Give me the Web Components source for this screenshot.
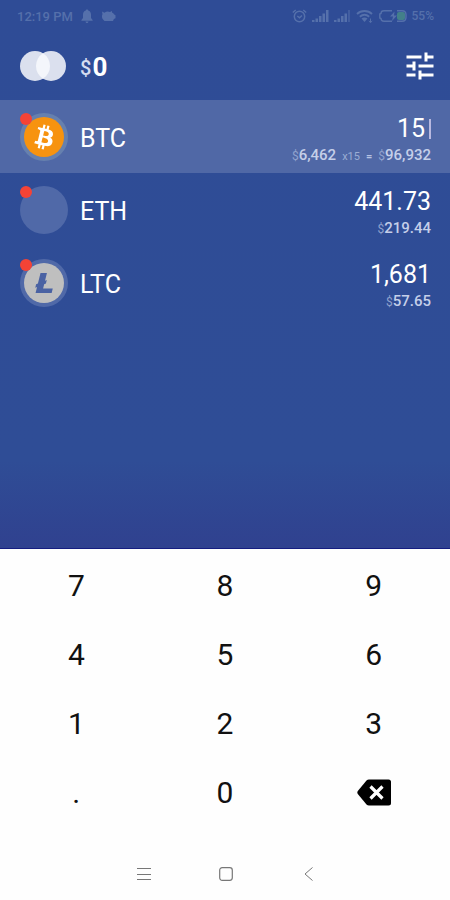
<!DOCTYPE html>
<html lang="en">
<head>
<meta charset="utf-8">
<meta name="viewport" content="width=device-width, initial-scale=1">
<title>Portfolio</title>
<style>
  body {
    margin: 0;
    font-family: Roboto, "Liberation Sans", sans-serif;
    color: #fff;
    background: #fefefe;
  }
</style>
</head>
<body>
<wallet-app>
  <status-bar slot="status"></status-bar>
  <total-header slot="header" total="0"></total-header>
  <coin-row symbol="BTC" amount="15" active>
    <coin-icon slot="icon" coin="btc"></coin-icon>
    <fiat-value value="6,462"></fiat-value>
    <small-note>x15</small-note>
    <small-note strong>=</small-note>
    <fiat-value value="96,932"></fiat-value>
  </coin-row>
  <coin-row symbol="ETH" amount="441.73">
    <coin-icon slot="icon"></coin-icon>
    <fiat-value value="219.44"></fiat-value>
  </coin-row>
  <coin-row symbol="LTC" amount="1,681">
    <coin-icon slot="icon" coin="ltc"></coin-icon>
    <fiat-value value="57.65"></fiat-value>
  </coin-row>
  <key-pad slot="keys"></key-pad>
  <nav-bar slot="nav"></nav-bar>
</wallet-app>

<script>
function makeTemplate(html) {
  const template = document.createElement("template");
  template.innerHTML = html;
  return template;
}

function attach(element, template) {
  element.attachShadow({ mode: "open" });
  element.shadowRoot.appendChild(template.content.cloneNode(true));
}

const appTemplate = makeTemplate(`
  <style>
    :host {
      display: flex;
      flex-direction: column;
      min-height: 100vh;
    }
    main {
      flex: 1;
      background: linear-gradient(to bottom, #2f4c96 0%, #2f4d96 84%, #30418f 100%);
      border-bottom: 1px solid #151d80;
    }
  </style>
  <main>
    <slot name="status"></slot>
    <slot name="header"></slot>
    <slot></slot>
  </main>
  <slot name="keys"></slot>
  <slot name="nav"></slot>
`);

class WalletApp extends HTMLElement {
  constructor() {
    super();
    attach(this, appTemplate);
  }
  connectedCallback() {
    this.addEventListener("key-press", (e) => {
      const row = this.querySelector("coin-row[active]");
      if (row) row.type(e.detail);
    });
  }
}

const statusTemplate = makeTemplate(`
  <style>
    :host {
      display: flex;
      align-items: center;
      justify-content: space-between;
      height: 32px;
      padding: 0 16px 0 17px;
      font-size: 12px;
      font-weight: 500;
      color: #5570ab;
    }
    .side {
      display: flex;
      align-items: center;
      gap: 8px;
    }
    .time { font-size: 13px; }
    .right { gap: 5px; }
    svg { display: block; fill: currentColor; }
    .line { fill: none; stroke: currentColor; }
  </style>
  <div class="side">
    <span class="time">12:19 PM</span>
    <svg width="12" height="14" viewBox="0 0 12 14"><path d="M6 0.5c.8 0 1.2.5 1.2 1.1C9 2.100 10 3.700 10 5.600V9l1.600 2v.8H.4V11L2 9V5.600C2 3.700 3 2.100 4.800 1.600 4.800 1 5.200.5 6 .5zM4.500 12.500h3C7.500 13.300 6.800 14 6 14s-1.500-.7-1.500-1.500z"/></svg>
    <svg width="15" height="12" viewBox="0 0 15 12"><path d="M1 1.500l2.500 1.200C5 1.500 7 1 9 2l2-1v1.500c1 .3 1.700 1 2.200 2l1.300.7v3l-1.600.8L12 11H3.500L1.600 9C.8 7.500.7 5.500 1.500 4.200z"/></svg>
  </div>
  <div class="side right">
    <svg class="line" width="15" height="14" viewBox="0 0 15 14" stroke-width="1.500"><circle cx="7.500" cy="7.500" r="5.200"/><path d="M.8 3.500L3.700 1M14.200 3.500L11.300 1M5.300 7l2.200 1.800L10 6.500"/></svg>
    <svg width="17" height="12" viewBox="0 0 17 12"><path d="M0 10h2.500v2H0zM3.500 8.500H6V12H3.500zM7 6h2.500v6H7zM10.500 3.500H13V12h-2.500zM14 0h2.500v12H14z"/></svg>
    <svg width="17" height="12" viewBox="0 0 17 12"><path d="M0 10h2.500v2H0zM3.500 8.500H6V12H3.500zM7 6h2.500v6H7zM10.500 3.500H13V12h-2.500z"/><path d="M14 0h2v12h-2z" opacity=".5"/></svg>
    <svg class="line" width="18" height="14" viewBox="0 0 18 14" stroke-width="1.800"><path d="M1 5C5 1 12 1 16 5M3.800 7.800c3-2.600 6.400-2.600 9.400 0"/><path d="M5.500 9.500q3-2 6 0l-3 3.500z" fill="currentColor" stroke="none"/><path d="M14.500 9.500v4M12.800 12l1.700 1.600 1.700-1.600" stroke-width="1"/></svg>
    <svg width="28" height="12" viewBox="0 0 28 12"><path class="line" stroke-width="1.400" d="M13 .8H5C2.800.8 2 2.500 2 3.500L.8 4v4L2 8.500c0 1.500 1 2.700 3 2.700h8"/><path class="line" stroke-width="1.400" d="M18 .8h5q4 0 4 4v2.400q0 4-4 4h-5"/><rect x="18" y="2" width="8" height="8" rx="2" fill="#43808a"/><path d="M15.500 1.500L11 6.500h3l-1 4.500 5-5.500h-3z"/></svg>
    <span>55%</span>
  </div>
`);

class StatusBar extends HTMLElement {
  constructor() {
    super();
    attach(this, statusTemplate);
  }
}

const headerTemplate = makeTemplate(`
  <style>
    :host {
      display: flex;
      align-items: center;
      height: 68px;
      padding: 0 12px 0 20px;
    }
    .total {
      flex: 1;
      margin-left: 14px;
      padding-top: 2px;
      font-size: 26px;
      font-weight: 700;
      line-height: 32px;
    }
    .total small {
      margin-right: 1px;
      font-size: 20px;
      font-weight: 500;
      vertical-align: 1px;
      color: #d5dcf0;
    }
    button {
      padding: 0;
      border: 0;
      background: none;
      color: #fff;
      cursor: pointer;
    }
    svg { display: block; }
  </style>
  <svg width="46" height="30" viewBox="0 0 46 30">
    <circle cx="15" cy="15" r="15" fill="#dbe0ee"/>
    <circle cx="31" cy="15" r="15" fill="#dbe0ee"/>
    <path d="M23 2.300a15 15 0 0 1 0 25.400a15 15 0 0 1 0-25.400z" fill="#f4f6fb"/>
  </svg>
  <div class="total"><small>$</small><span></span></div>
  <button aria-label="Settings">
    <svg width="36" height="36" viewBox="0 0 24 24" fill="currentColor"><path d="M3 17v2h6v-2H3zM3 5v2h10V5H3zm10 16v-2h8v-2h-8v-2h-2v6h2zM7 9v2H3v2h4v2h2V9H7zm14 4v-2H11v2h10zm-6-4h2V7h4V5h-4V3h-2v6z"/></svg>
  </button>
`);

class TotalHeader extends HTMLElement {
  constructor() {
    super();
    attach(this, headerTemplate);
    this.shadowRoot.querySelector("span").textContent = this.getAttribute("total");
  }
}

const logos = {
  btc: `<circle cx="16" cy="16" r="16" fill="#f7930f"/>
    <path fill="#fff" fill-rule="evenodd" d="M23.189 14.020c.314-2.096-1.283-3.223-3.465-3.975l.708-2.840-1.728-.43-.69 2.765c-.454-.114-.92-.22-1.385-.326l.695-2.783L15.596 6l-.708 2.839c-.376-.086-.746-.17-1.104-.26l.002-.009-2.384-.595-.46 1.846s1.283.294 1.256.312c.7.175.826.638.805 1.006l-.806 3.235c.048.012.11.03.18.057l-.183-.045-1.130 4.532c-.086.212-.303.531-.793.41.018.025-1.256-.313-1.256-.313l-.858 1.978 2.250.561c.418.105.828.215 1.231.318l-.715 2.872 1.727.43.708-2.840c.472.127.93.245 1.378.357l-.706 2.828 1.728.43.715-2.866c2.948.558 5.164.333 6.097-2.333.752-2.146-.037-3.385-1.588-4.192 1.130-.26 1.980-1.003 2.207-2.538zm-3.950 5.538c-.533 2.147-4.148.986-5.320.695l.95-3.805c1.172.293 4.929.872 4.370 3.110zm.535-5.569c-.487 1.953-3.495.96-4.470.717l.86-3.450c.975.243 4.118.696 3.610 2.733z"/>`,
  ltc: `<circle cx="16" cy="16" r="16" fill="#bfbfbf"/>
    <path fill="#4a62a3" d="M10.427 19.214L9 19.768l.688-2.759 1.444-.58L13.213 8h5.129l-1.519 6.196 1.410-.571-.68 2.750-1.427.571-.848 3.483H23L22.127 24H9.252z"/>`
};

const iconTemplate = makeTemplate(`
  <style>
    :host {
      position: relative;
      display: grid;
      place-items: center;
      width: 48px;
      height: 48px;
      border-radius: 50%;
      background: #5069a8;
    }
    :host([coin="btc"]) { background: #6680ae; }
    .dot {
      position: absolute;
      top: 0;
      left: 0;
      width: 12px;
      height: 12px;
      border-radius: 50%;
      background: #f44336;
    }
  </style>
  <svg width="40" height="40" viewBox="0 0 32 32"></svg>
  <span class="dot"></span>
`);

class CoinIcon extends HTMLElement {
  constructor() {
    super();
    attach(this, iconTemplate);
    this.shadowRoot.querySelector("svg").innerHTML = logos[this.getAttribute("coin")] || "";
  }
}

const fiatTemplate = makeTemplate(`
  <style>
    :host {
      font-size: 15px;
      font-weight: 500;
      color: #c5cfe9;
    }
    small {
      font-size: 12px;
      font-weight: 400;
      color: #90a2cd;
    }
  </style>
  <small>$</small><span></span>
`);

class FiatValue extends HTMLElement {
  constructor() {
    super();
    attach(this, fiatTemplate);
    this.shadowRoot.querySelector("span").textContent = this.getAttribute("value");
  }
}

const noteTemplate = makeTemplate(`
  <style>
    :host {
      font-size: 11px;
      color: #9badd4;
    }
    :host([strong]) {
      font-weight: 700;
      color: #b5c2e2;
    }
  </style>
  <slot></slot>
`);

class SmallNote extends HTMLElement {
  constructor() {
    super();
    attach(this, noteTemplate);
  }
}

const rowTemplate = makeTemplate(`
  <style>
    :host {
      display: flex;
      align-items: center;
      height: 73px;
      padding: 0 19px 0 20px;
    }
    :host([active]) { background: #5068a6; }
    label {
      margin-left: 12px;
      padding-top: 4px;
      font-size: 25px;
    }
    .values {
      flex: 1;
      min-width: 0;
      padding-top: 6px;
    }
    .amount {
      display: flex;
      align-items: center;
      gap: 4px;
      height: 32px;
    }
    input {
      flex: 1;
      min-width: 0;
      padding: 0;
      border: 0;
      outline: 0;
      background: none;
      color: inherit;
      font: inherit;
      font-size: 25px;
      line-height: 32px;
      text-align: right;
    }
    .caret {
      display: none;
      width: 2px;
      height: 20px;
      background: #b9b9e0;
    }
    :host([active]) .caret { display: block; }
    .fiat {
      display: flex;
      align-items: baseline;
      justify-content: flex-end;
      gap: 6px;
      line-height: 20px;
    }
  </style>
  <slot name="icon"></slot>
  <label for="amount"></label>
  <div class="values">
    <div class="amount"><input id="amount" type="text" inputmode="none" readonly><span class="caret"></span></div>
    <div class="fiat"><slot></slot></div>
  </div>
`);

class CoinRow extends HTMLElement {
  constructor() {
    super();
    attach(this, rowTemplate);
    this.input = this.shadowRoot.querySelector("input");
    this.input.value = this.getAttribute("amount");
    this.shadowRoot.querySelector("label").textContent = this.getAttribute("symbol");
  }

  type(key) {
    if (key === "back") {
      this.input.value = this.input.value.slice(0, -1);
    } else {
      this.input.value += key;
    }
  }

  connectedCallback() {
    this.addEventListener("click", () => {
      this.parentElement.querySelectorAll("coin-row").forEach((row) => {
        row.toggleAttribute("active", row === this);
      });
    });
  }
}

const padTemplate = makeTemplate(`
  <style>
    :host {
      display: grid;
      grid-template-columns: repeat(3, 1fr);
      grid-auto-rows: 69px;
      padding: 2px 2px 20px;
      background: #fefefe;
    }
    button {
      display: grid;
      place-items: center;
      padding: 0;
      border: 0;
      background: none;
      color: #111;
      font: inherit;
      font-size: 30px;
      cursor: pointer;
    }
  </style>
  <button>7</button>
  <button>8</button>
  <button>9</button>
  <button>4</button>
  <button>5</button>
  <button>6</button>
  <button>1</button>
  <button>2</button>
  <button>3</button>
  <button>.</button>
  <button>0</button>
  <button value="back" aria-label="Delete">
    <svg width="34" height="27" viewBox="0 0 34 27">
      <path fill="#000" d="M9.500 1.500Q10.500.5 12 .5h19.500Q34 .5 34 3v21q0 2.500-2.500 2.500H12q-1.500 0-2.500-1L.8 15q-1-1.500 0-3z"/>
      <path fill="none" stroke="#fff" stroke-width="3.200" d="M13.500 7.500l12 12M25.500 7.500l-12 12"/>
    </svg>
  </button>
`);

class KeyPad extends HTMLElement {
  constructor() {
    super();
    attach(this, padTemplate);
  }
  connectedCallback() {
    this.shadowRoot.querySelectorAll("button").forEach((btn) => {
      btn.addEventListener("click", () => {
        this.dispatchEvent(new CustomEvent("key-press", {
          bubbles: true,
          detail: btn.value || btn.textContent
        }));
      });
    });
  }
}

const navTemplate = makeTemplate(`
  <style>
    :host {
      display: flex;
      justify-content: center;
      gap: 58px;
      height: 53px;
      padding-left: 1px;
      background: #fefefe;
    }
    button {
      display: grid;
      place-items: center;
      width: 24px;
      padding: 0;
      border: 0;
      background: none;
      cursor: pointer;
    }
    svg { fill: none; stroke: #777; }
  </style>
  <button aria-label="Menu"><svg width="14" height="14" viewBox="0 0 14 14"><path d="M0 1.500h14M0 7.500h14M0 12.500h14"/></svg></button>
  <button aria-label="Home"><svg width="14" height="14" viewBox="0 0 14 14"><rect x=".7" y=".7" width="12.600" height="12.600" rx="2.500" stroke-width="1.200"/></svg></button>
  <button aria-label="Back"><svg width="14" height="14" viewBox="0 0 14 14"><path d="M11.500.5L4 7l7.500 6.500"/></svg></button>
`);

class NavBar extends HTMLElement {
  constructor() {
    super();
    attach(this, navTemplate);
  }
}

window.customElements.define("wallet-app", WalletApp);
window.customElements.define("status-bar", StatusBar);
window.customElements.define("total-header", TotalHeader);
window.customElements.define("coin-icon", CoinIcon);
window.customElements.define("fiat-value", FiatValue);
window.customElements.define("small-note", SmallNote);
window.customElements.define("coin-row", CoinRow);
window.customElements.define("key-pad", KeyPad);
window.customElements.define("nav-bar", NavBar);
</script>
</body>
</html>
